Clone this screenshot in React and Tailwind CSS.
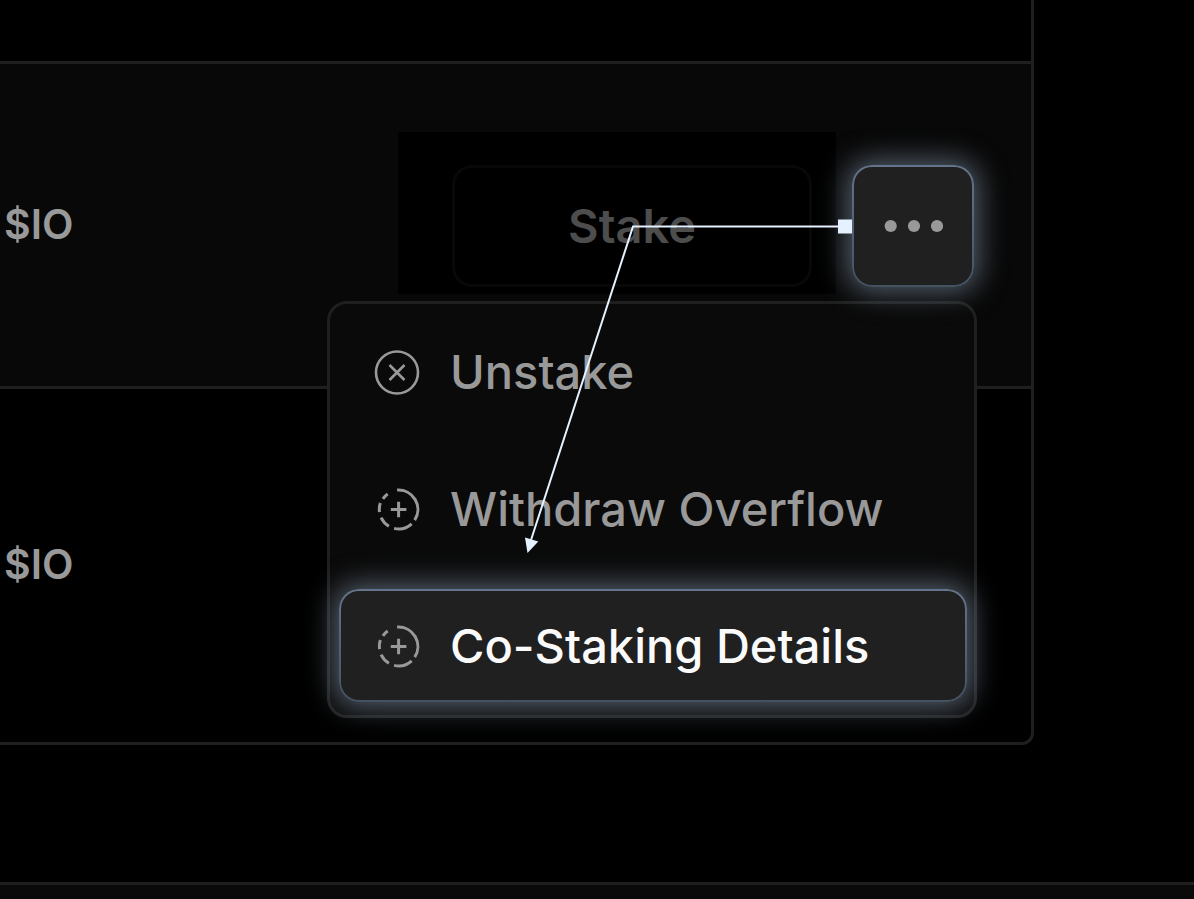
import React from "react";

function CancelIcon() {
  return (
    <svg viewBox="0 0 48 48" className="size-12 shrink-0" fill="none" stroke="currentColor" strokeWidth="2.6" aria-hidden="true">
      <circle cx="24" cy="24.5" r="21" />
      <path d="M16.5 17l15 15M31.5 17l-15 15" />
    </svg>
  );
}

function DashedPlusIcon() {
  return (
    <svg viewBox="0 0 48 48" className="size-12 shrink-0" fill="none" stroke="currentColor" strokeWidth="3" aria-hidden="true">
      <g transform="translate(0.3 0.7)">
        <path d="M23.8 4.4A19.4 19.4 0 0 1 41.4 34.4M38.4 38.2A19.4 19.4 0 0 1 20.8 42.7M15.6 40.6A19.4 19.4 0 0 1 7.8 32M6.2 26.4A19.4 19.4 0 0 1 7 17.4M9.6 13.2A19.4 19.4 0 0 1 14.4 8.4" />
        <path d="M25.3 16v15.6M17.5 23.8h15.6" />
      </g>
    </svg>
  );
}

function Connector() {
  return (
    <svg
      viewBox="0 0 330 340"
      className="pointer-events-none absolute right-full top-[54px] z-30 h-[340px] w-[330px] max-w-none"
      aria-hidden="true"
    >
      <path d="M318 7.5H111L9 321" fill="none" stroke="#e5f1ff" strokeWidth="2" />
      <rect x="316" y="0.5" width="14" height="14" fill="#e5f1ff" />
      <path d="M5.5 334L3 318.500L16.300 322.500Z" fill="#e5f1ff" />
    </svg>
  );
}

const items = [
  { label: "Unstake", icon: CancelIcon },
  { label: "Withdraw Overflow", icon: DashedPlusIcon },
  { label: "Co-Staking Details", icon: DashedPlusIcon, active: true },
];

const glow =
  "border-2 border-transparent [background:linear-gradient(#202020,#202020)_padding-box,linear-gradient(#64748b,#435161)_border-box] shadow-[0_0_28px_5px_rgba(160,182,207,0.5)]";

function ActionMenu() {
  return (
    <div
      role="menu"
      className="absolute -right-[3px] top-full z-10 mt-[14px] flex w-[650px] flex-col gap-6 rounded-[20px] border-3 border-[#1f1f1f] bg-[#0a0a0a] pt-[11px] pb-[13px] pl-[9px] pr-[7px]"
    >
      {items.map(({ label, icon: Icon, active }) => (
        <button
          key={label}
          type="button"
          role="menuitem"
          className={`flex h-[113px] w-full items-center gap-[29px] rounded-[20px] px-8 text-left text-[47px] font-medium leading-none whitespace-nowrap text-[#999999] ${
            active ? glow : "border-2 border-transparent"
          }`}
        >
          <Icon />
          <span className={active ? "text-[#fafafa]" : ""}>{label}</span>
        </button>
      ))}
    </div>
  );
}

export default function App() {
  return (
    <div className="flex min-h-screen flex-col overflow-hidden bg-black font-['Inter',sans-serif] text-[#999999]">
      <main className="mr-40 rounded-br-xl border-r-3 border-b-3 border-[#1f1f1f]">
        <table className="w-full border-separate border-spacing-0">
          <tbody>
            <tr>
              <td colSpan={2} className="h-16 border-b-3 border-[#1f1f1f] p-0" />
            </tr>
            <tr className="bg-[#080808]">
              <td className="h-[325px] border-b-3 border-[#1f1f1f] p-0 pb-0.5 pl-1 text-[41px] font-semibold leading-none">$IO</td>
              <td className="border-b-3 border-[#1f1f1f] p-0 pr-[57px] pt-[68px] align-top">
                <div className="flex items-end justify-end gap-4">
                  <div className="bg-black pb-[7px] pl-[54px] pr-6 pt-[33px]">
                    <button
                      type="button"
                      disabled
                      className="flex h-[122px] w-[360px] items-center justify-center rounded-[20px] border-3 border-[#080808] pb-0.5 text-[47px] font-semibold leading-none text-[#4d4d4d]"
                    >
                      Stake
                    </button>
                  </div>
                  <div className="relative mb-[7px]">
                    <button
                      type="button"
                      aria-label="More actions"
                      aria-haspopup="menu"
                      aria-expanded="true"
                      className={`relative z-20 flex size-[122px] items-center justify-center rounded-[20px] ${glow}`}
                    >
                      <svg viewBox="0 0 60 14" className="h-[14px] w-[60px]" fill="currentColor" aria-hidden="true">
                        <circle cx="7.700" cy="7" r="6.1" />
                        <circle cx="31" cy="7" r="6.1" />
                        <circle cx="54" cy="7" r="6.1" />
                      </svg>
                    </button>
                    <ActionMenu />
                    <Connector />
                  </div>
                </div>
              </td>
            </tr>
            <tr>
              <td className="h-[353px] p-0 pb-0.5 pl-1 text-[41px] font-semibold leading-none">$IO</td>
              <td className="p-0" />
            </tr>
          </tbody>
        </table>
      </main>
      <footer className="mt-[137px] flex-1 border-t-3 border-[#1f1f1f] bg-[#0a0a0a]" />
    </div>
  );
}
